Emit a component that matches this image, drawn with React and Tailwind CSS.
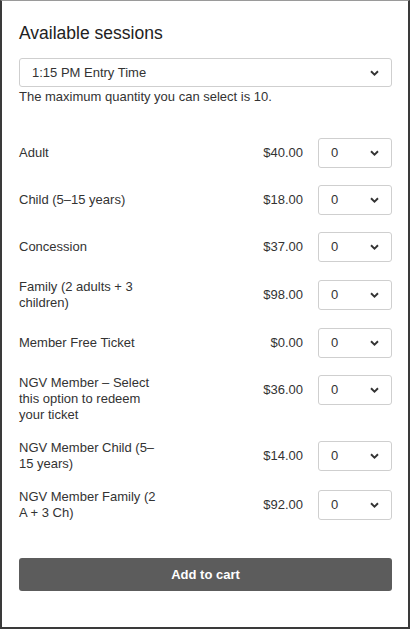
import React from "react";

const tickets = [
  { name: "Adult", price: "$40.00" },
  { name: "Child (5–15 years)", price: "$18.00" },
  { name: "Concession", price: "$37.00" },
  { name: "Family (2 adults + 3 children)", price: "$98.00" },
  { name: "Member Free Ticket", price: "$0.00" },
  { name: "NGV Member – Select this option to redeem your ticket", price: "$36.00", top: true },
  { name: "NGV Member Child (5–15 years)", price: "$14.00" },
  { name: "NGV Member Family (2 A + 3 Ch)", price: "$92.00" },
];

function Chevron() {
  return (
    <svg width="9" height="6" viewBox="0 0 9 6" className="shrink-0">
      <path d="M1 1.2 L4.5 4.6 L8 1.2" fill="none" stroke="#333" strokeWidth="1.9" />
    </svg>
  );
}

export default function App() {
  return (
    <div className="w-[410px] h-[629px] border-2 border-t border-[#3a3a3a] border-t-[#9a9a9a] bg-white pl-[17px] pr-[16px] pt-[21px] font-['Liberation_Sans',Arial,sans-serif] text-[#333]">
      {/* Header */}
      <h2 className="text-[17.5px] leading-[22px] text-[#222]">Available sessions</h2>

      {/* Session picker */}
      <div className="mt-[14px] h-[29px] border border-[#cfcfcf] rounded-[3px] flex items-center justify-between pl-[12px] pr-[12px] text-[13px]">
        <span>1:15 PM Entry Time</span>
        <Chevron />
      </div>
      <p className="mt-[2px] text-[13px] leading-[16px] text-[#333]">
        The maximum quantity you can select is 10.
      </p>

      {/* Ticket rows */}
      <div className="mt-[33px] flex flex-col gap-[17px]">
        {tickets.map((t) => (
          <div key={t.name} className="flex items-center text-[13px] leading-[16px]">
            <div className="w-[140px]">{t.name}</div>
            <div className={"flex-1 flex items-center justify-end " + (t.top ? "self-start" : "")}>
              <span className="mr-[15px]">{t.price}</span>
              <div className="w-[74px] h-[30px] border border-[#cfcfcf] rounded-[3px] flex items-center justify-between pl-[12px] pr-[12px]">
                <span>0</span>
                <Chevron />
              </div>
            </div>
          </div>
        ))}
      </div>

      <button className="mt-[37px] w-full h-[33px] bg-[#5c5c5c] rounded-[3px] text-white text-[13px] font-bold">
        Add to cart
      </button>
    </div>
  );
}
